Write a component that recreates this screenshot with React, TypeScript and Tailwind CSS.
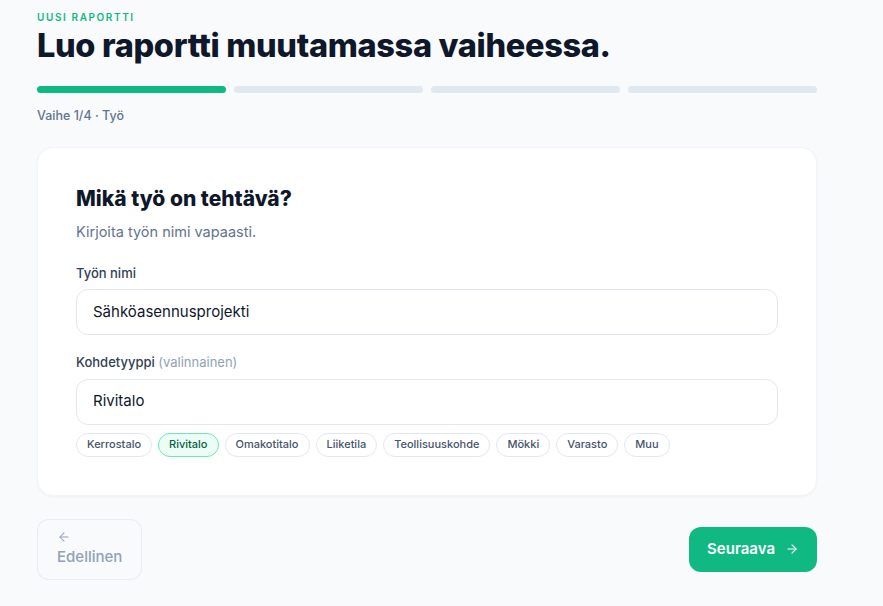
import { ArrowLeft, ArrowRight } from 'lucide-react'

const types = ['Kerrostalo', 'Rivitalo', 'Omakotitalo', 'Liiketila', 'Teollisuuskohde', 'Mökki', 'Varasto', 'Muu']

export default function App() {
  const selected = 'Rivitalo'
  const step = 1

  return (
    <div className="min-h-[606px] bg-[#f8fafc] font-['Inter',sans-serif] text-slate-900">
      <div className="w-[780px] ml-[37px] pt-[10px]">
        {/* Header */}
        <p className="text-[10px] font-semibold tracking-[0.16em] text-[#10b981]">UUSI RAPORTTI</p>
        <h1 className="mt-[1px] text-[32.5px] leading-[40px] font-extrabold tracking-[-0.01em] text-[#0f172a]">
          Luo raportti muutamassa vaiheessa.
        </h1>

        {/* Progress */}
        <div className="mt-[20px] grid grid-cols-4 gap-2">
          {[1, 2, 3, 4].map((s) => (
            <div key={s} className={`h-[7px] rounded-full ${s <= step ? 'bg-[#10b981]' : 'bg-[#e2e8f0]'}`} />
          ))}
        </div>
        <p className="mt-[14px] text-[12.5px] font-medium text-slate-500">Vaihe 1/4 · Työ</p>

        {/* Card */}
        <div className="mt-[21px] bg-white border border-slate-100 rounded-2xl shadow-[0_1px_3px_rgba(15,23,42,0.04)] px-[38px] pt-[37px] pb-[38px]">
          <h2 className="text-[21px] leading-[28px] font-extrabold text-[#0f172a]">Mikä työ on tehtävä?</h2>
          <p className="mt-[8px] text-[14.5px] text-slate-500">Kirjoita työn nimi vapaasti.</p>

          <label className="block mt-[21px] text-[13px] font-medium text-slate-700">Työn nimi</label>
          <div className="mt-[6px] h-[46px] flex items-center px-4 rounded-xl border border-[#e2e8f0] text-[15px] text-slate-900">
            Sähköasennusprojekti
          </div>

          <label className="block mt-[18px] text-[13px] font-medium text-slate-700">
            Kohdetyyppi <span className="font-normal text-slate-400">(valinnainen)</span>
          </label>
          <div className="mt-[6px] h-[46px] flex items-center px-4 rounded-xl border border-[#e2e8f0] text-[15px] text-slate-900">
            Rivitalo
          </div>

          <div className="mt-[8px] flex flex-wrap gap-[6px]">
            {types.map((t) => (
              <span
                key={t}
                className={`h-6 flex items-center px-[10px] rounded-full border text-[11px] font-medium ${
                  t === selected
                    ? 'bg-[#ecfdf5] border-[#6ee7b7] text-[#065f46]'
                    : 'bg-white border-[#e2e8f0] text-slate-600'
                }`}
              >
                {t}
              </span>
            ))}
          </div>
        </div>

        {/* Footer buttons */}
        <div className="mt-[23px] flex items-center justify-between">
          <button
            disabled
            className="w-[105px] h-[61px] flex flex-col items-start justify-center px-[19px] rounded-xl border border-slate-200/70 bg-[#f8fafc] text-slate-400 text-[15px] leading-[22px] font-medium"
          >
            <ArrowLeft className="w-[14px] h-[14px]" strokeWidth={1.75} />
            <span className="mt-[2px]">Edellinen</span>
          </button>
          <button className="h-[45px] flex items-center gap-[10px] px-[18px] rounded-xl bg-[#10b981] text-white text-[15px] font-semibold">
            Seuraava
            <ArrowRight className="w-[14px] h-[14px]" strokeWidth={2} />
          </button>
        </div>
      </div>
    </div>
  )
}
